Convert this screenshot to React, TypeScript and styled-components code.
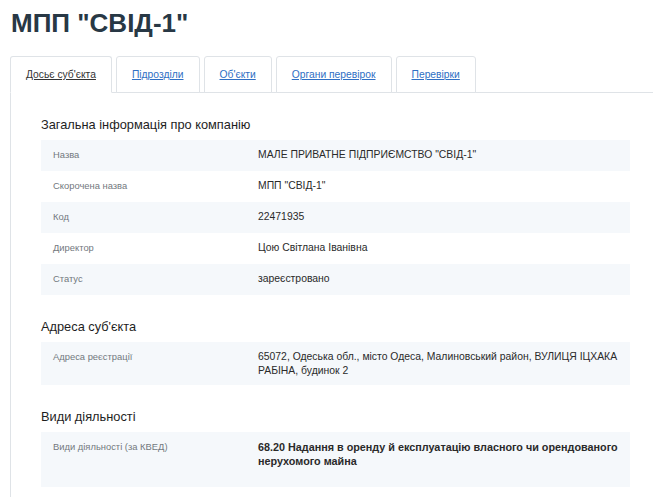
import styled, { createGlobalStyle } from 'styled-components'

const GlobalStyle = createGlobalStyle`
  html, body {
    margin: 0;
    padding: 0;
    background: #fff;
    overflow: hidden;
  }
  body {
    font-family: "Liberation Sans", Arial, sans-serif;
    color: #333;
  }
`

const Page = styled.div`
	padding: 7px 0 0 10px;
`

const Title = styled.h1`
	margin: 0 0 17px 1px;
	font-size: 26px;
	line-height: 32px;
	font-weight: bold;
	color: #283845;
`

const TabBar = styled.ul`
	display: flex;
	margin: 0;
	padding: 0;
	list-style: none;
	border-bottom: 1px solid #dfe3e7;
`

const Tab = styled.li<{ $active?: boolean }>`
	margin: 0 4px -1px 0;
	height: 35px;
	padding: 0 15px;
	display: flex;
	align-items: center;
	background: #fff;
	border: 1px solid #dfe3e7;
	border-bottom-color: ${p => (p.$active ? '#fff' : '#dfe3e7')};
	border-radius: 3px 3px 0 0;
	font-size: 10.3px;

	a {
		color: ${p => (p.$active ? '#333' : '#2f6fc4')};
		text-decoration: underline;
	}
`

const Panel = styled.div`
	border-left: 1px solid #dfe3e7;
	padding: 0 23px 0 30px;
	min-height: 420px;
`

const Section = styled.section`
	padding-top: 23px;
`

const Heading = styled.h3`
	margin: 0 0 7px;
	font-size: 12.8px;
	line-height: 17px;
	font-weight: normal;
	color: #1e1e1e;
`

const Row = styled.div<{ $shaded?: boolean }>`
	display: grid;
	grid-template-columns: 205px 1fr;
	box-sizing: border-box;
	min-height: 31px;
	background: ${p => (p.$shaded ? '#f5f8fb' : 'transparent')};
	padding: 8px 8px 7px 12px;
	line-height: 14px;
`

const Label = styled.div`
	font-size: 9.4px;
	color: #73787e;
`

const Value = styled.div<{ $strong?: boolean }>`
	font-size: ${p => (p.$strong ? '10.8px' : '10.4px')};
	font-weight: ${p => (p.$strong ? 'bold' : 'normal')};
	color: #2a2a2a;
`

const KvedItem = styled.p`
	margin: 0 0 12px;
`

const general = [
	['Назва', 'МАЛЕ ПРИВАТНЕ ПІДПРИЄМСТВО "СВІД-1"'],
	['Скорочена назва', 'МПП "СВІД-1"'],
	['Код', '22471935'],
	['Директор', 'Цою Світлана Іванівна'],
	['Статус', 'зареєстровано'],
]

const tabs = ['Досьє суб\'єкта', 'Підрозділи', 'Об\'єкти', 'Органи перевірок', 'Перевірки']

const App = () => {
	return (
		<>
			<GlobalStyle />
			<Page>
				<Title>МПП "СВІД-1"</Title>
				<TabBar>
					{tabs.map((t, i) => (
						<Tab key={t} $active={i === 0}>
							<a>{t}</a>
						</Tab>
					))}
				</TabBar>
				<Panel>
					<Section>
						<Heading>Загальна інформація про компанію</Heading>
						{general.map(([l, v], i) => (
							<Row key={l} $shaded={i % 2 === 0}>
								<Label>{l}</Label>
								<Value>{v}</Value>
							</Row>
						))}
					</Section>
					<Section>
						<Heading>Адреса суб'єкта</Heading>
						<Row $shaded>
							<Label>Адреса реєстрації</Label>
							<Value>65072, Одеська обл., місто Одеса, Малиновський район, ВУЛИЦЯ ІЦХАКА РАБІНА, будинок 2</Value>
						</Row>
					</Section>
					<Section>
						<Heading>Види діяльності</Heading>
						<Row $shaded>
							<Label>Види діяльності (за КВЕД)</Label>
							<Value $strong>
								<KvedItem>68.20 Надання в оренду й експлуатацію власного чи орендованого нерухомого майна</KvedItem>
							</Value>
						</Row>
					</Section>
				</Panel>
			</Page>
		</>
	)
}

export default App
